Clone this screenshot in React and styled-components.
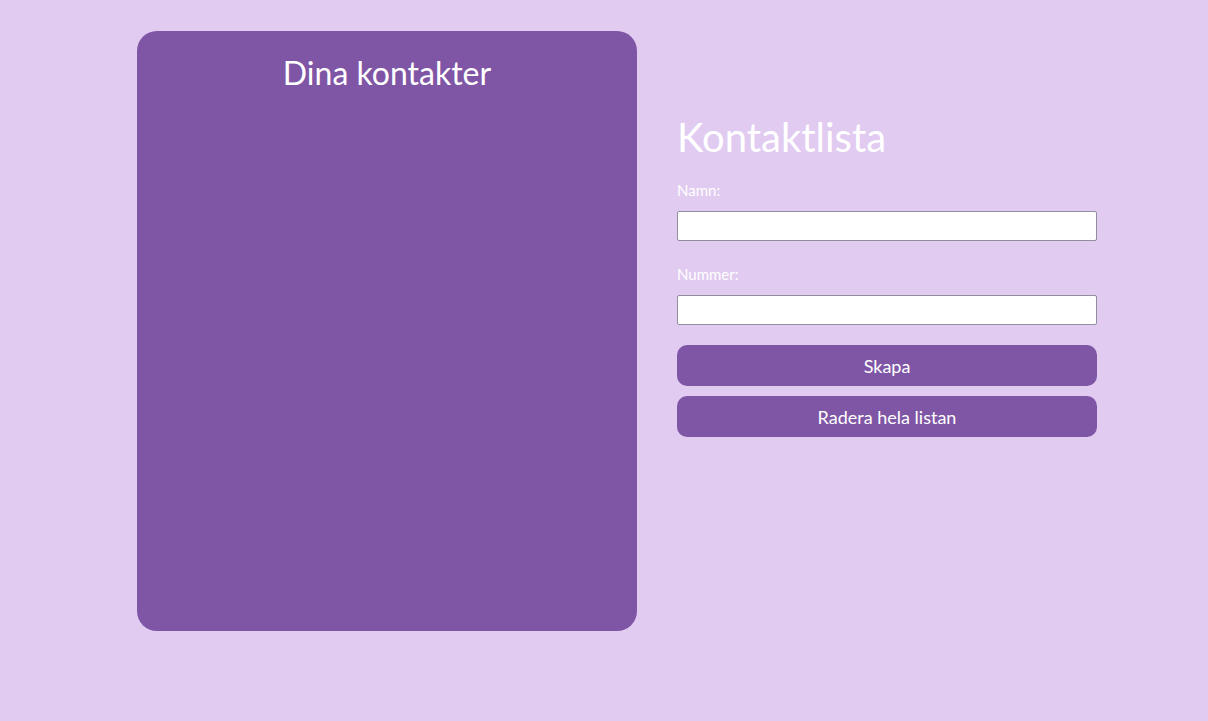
import React from "react";
import styled, { createGlobalStyle } from "styled-components";

const Global = createGlobalStyle`
  html, body { margin: 0; padding: 0; background: #e1cbf1; }
  body { font-family: "Segoe UI", "Lato", "Noto Sans", sans-serif; color: #fff; }
  * { box-sizing: border-box; }
`;

const Page = styled.div`
  min-height: 721px;
  display: flex;
  align-items: flex-start;
  gap: 40px;
  padding: 31px 0 0 137px;
`;

const Panel = styled.section`
  width: 500px;
  height: 600px;
  background: #7f56a5;
  border-radius: 20px;
  display: flex;
  flex-direction: column;
  align-items: center;
  padding-top: 22px;
`;

const PanelTitle = styled.h2`
  margin: 0;
  font-size: 32px;
  font-weight: 400;
  line-height: 40px;
`;

const Form = styled.form`
  width: 420px;
  display: flex;
  flex-direction: column;
  padding-top: 82px;
`;

const Title = styled.h1`
  margin: 0 0 19px;
  font-size: 40px;
  font-weight: 400;
  line-height: 48px;
`;

const Label = styled.label`
  font-size: 15px;
  line-height: 20px;
  margin-bottom: 11px;
`;

const Input = styled.input`
  width: 420px;
  height: 30px;
  border: 1px solid #8f8f9d;
  border-radius: 2px;
  background: #fff;
  margin-bottom: ${(p) => p.$mb || 0}px;
  font-size: 15px;
  padding: 0 6px;
`;

const Button = styled.button`
  width: 420px;
  height: 41px;
  border: none;
  border-radius: 10px;
  background: #7f56a5;
  color: #fff;
  font-family: inherit;
  font-size: 18px;
  margin-bottom: 10px;
  cursor: pointer;
`;

export default function App() {
  return (
    <>
      <Global />
      <Page>
        <Panel>
          <PanelTitle>Dina kontakter</PanelTitle>
        </Panel>
        <Form onSubmit={(e) => e.preventDefault()}>
          <Title>Kontaktlista</Title>
          <Label>Namn:</Label>
          <Input $mb={23} />
          <Label>Nummer:</Label>
          <Input $mb={20} />
          <Button type="submit">Skapa</Button>
          <Button type="button">Radera hela listan</Button>
        </Form>
      </Page>
    </>
  );
}
